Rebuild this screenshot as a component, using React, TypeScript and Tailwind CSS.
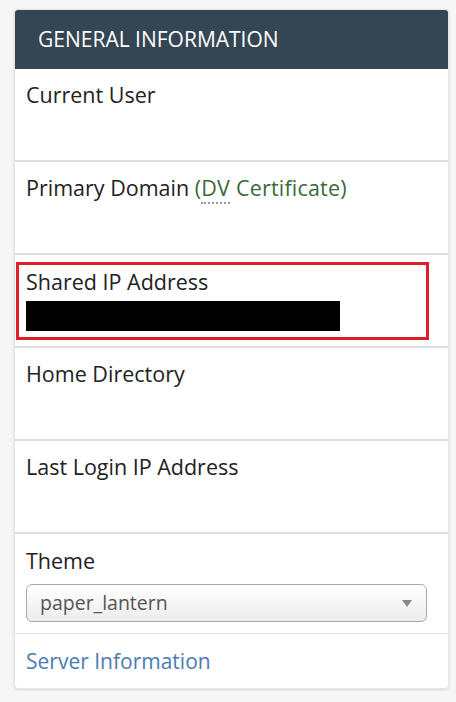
import React from "react";

const font = { fontFamily: '"Open Sans", "Noto Sans", sans-serif' };

function Row({ children }: { children: React.ReactNode }) {
  return (
    <div className="h-[93px] border-b-2 border-[#dedede] px-[11px] pt-[11px]">
      {children}
    </div>
  );
}

const label = "text-[21.5px] leading-[30px] text-[#222]";

export default function App() {
  return (
    <div className="min-h-[702px] w-[456px] bg-[#f6f6f6] pl-[14px] pr-[7px] pt-[9px]" style={font}>
      <div className="rounded-[4px] bg-white shadow-[0_1px_3px_rgba(0,0,0,0.12)] border border-[#e6e6e6] overflow-hidden">
        <div className="h-[59px] bg-[#344554] pl-[23px] flex items-center text-white text-[21px] leading-none">
          GENERAL INFORMATION
        </div>
        <Row>
          <div className={label}>Current User</div>
        </Row>
        <Row>
          <div className={label}>
            Primary Domain{" "}
            <span className="text-[#3b6a3b] tracking-[0.2px]">
              (<span className="border-b-2 border-dotted border-[#999]">DV</span> Certificate)
            </span>
          </div>
        </Row>
        <div className="h-[93px] border-b-2 border-[#dedede] pl-[1px] pr-[19px] pt-[7px]">
          <div className="h-[78px] border-[3px] border-[#dd1f2c] pl-[7px] pt-[2px]">
            <div className={label}>Shared IP Address</div>
            <div className="mt-[4px] h-[30px] w-[314px] bg-black" />
          </div>
        </div>
        <Row>
          <div className={label}>Home Directory</div>
        </Row>
        <Row>
          <div className={label}>Last Login IP Address</div>
        </Row>
        <div className="h-[100px] border-b border-[#e3e3e3] px-[11px] pt-[12px]">
          <div className={label}>Theme</div>
          <div className="mt-[8px] h-[38px] w-[401px] rounded-[6px] border border-[#aaa] bg-gradient-to-b from-white to-[#ececec] flex items-center justify-between pl-[13px] pr-[14px]">
            <span className="text-[19.5px] text-[#555] leading-none">paper_lantern</span>
            <svg width="10" height="7" viewBox="0 0 10 7">
              <path d="M0 0 L10 0 L5 7 Z" fill="#888" />
            </svg>
          </div>
        </div>
        <div className="h-[54px] px-[11px] pt-[12px]">
          <div className="text-[21px] leading-[30px] text-[#4a7db1]">Server Information</div>
        </div>
      </div>
    </div>
  );
}
